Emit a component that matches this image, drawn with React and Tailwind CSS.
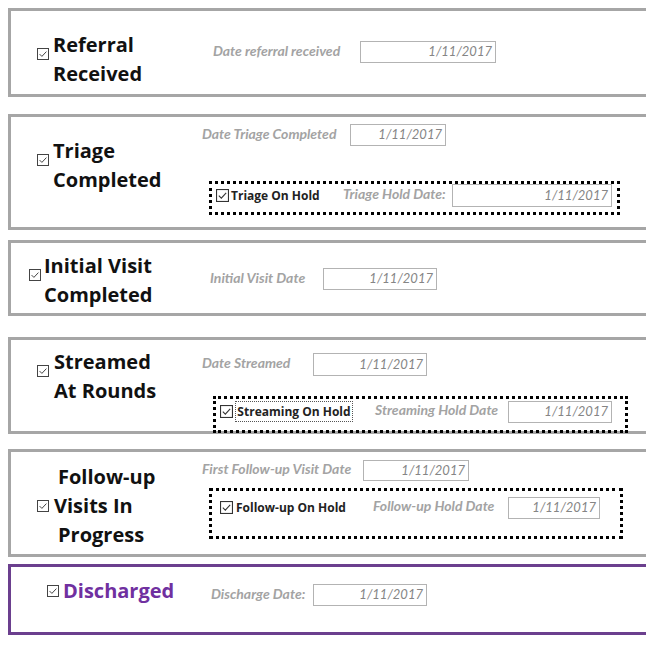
import React from "react";

const Check = ({ size = 12, color = "#444" }) => (
  <svg width={size} height={size} viewBox="0 0 12 12" className="shrink-0 block">
    <rect x="0.5" y="0.5" width="11" height="11" fill="white" stroke={color} strokeWidth="1" />
    <path d="M2.6 6.1 L4.9 8.4 L9.4 3.6" fill="none" stroke={color} strokeWidth="1" />
  </svg>
);

const titleCls = "font-['Open_Sans',sans-serif] font-bold text-[20px] leading-[29px] text-[#111] whitespace-nowrap";
const labelCls = "font-['Lato',sans-serif] italic font-bold text-[14px] leading-[16px] mb-[3px] text-[#a3a3a3] whitespace-nowrap";
const holdCls = "font-['Open_Sans',sans-serif] font-bold text-[12px] text-[#222] whitespace-nowrap";

const DateBox = ({ w, h = "h-[22px]" }) => (
  <div className={`${w} ${h} border border-[#b3b3b3] flex items-center justify-end pr-[3px] font-['Lato',sans-serif] italic text-[13px] text-[#858585] bg-white`}>
    1/11/2017
  </div>
);

export default function App() {
  return (
    <div className="w-[646px] h-[663px] overflow-hidden bg-white">
      {/* Panel 1 */}
      <div className="ml-2 mt-[8px] h-[89px] w-[660px] border-[3px] border-[#a6a6a6] flex items-start">
        <div className="w-[202px] shrink-0 pl-[26px] pt-[19px] flex items-start">
          <div className="mt-[18px]"><Check /></div>
          <div className={`ml-[4px] ${titleCls}`}>
            <div>Referral</div>
            <div>Received</div>
          </div>
        </div>
        <div className="pt-[30px]">
          <div className="flex items-center h-[22px]">
            <div className={`w-[147px] ${labelCls}`}>Date referral received</div>
            <DateBox w="w-[136px]" />
          </div>
        </div>
      </div>

      {/* Panel 2 */}
      <div className="ml-2 mt-[17px] h-[116px] w-[660px] border-[3px] border-[#a6a6a6] flex items-start">
        <div className="w-[191px] shrink-0 pl-[26px] pt-[19px] flex items-start">
          <div className="mt-[18px]"><Check /></div>
          <div className={`ml-[4px] ${titleCls}`}>
            <div>Triage</div>
            <div>Completed</div>
          </div>
        </div>
        <div className="pt-[7px]">
          <div className="flex items-center h-[22px]">
            <div className={`w-[148px] ${labelCls}`}>Date Triage Completed</div>
            <DateBox w="w-[96px]" />
          </div>
          <div className="ml-[7px] mt-[35px] w-[411px] h-[34px] border-[3px] border-dotted border-black flex items-center pl-[4px] pb-[5px]">
            <Check color="#333" size={13} />
            <div className={`ml-[2px] w-[112px] ${holdCls}`}>Triage On Hold</div>
            <div className={`w-[109px] ${labelCls}`}>Triage Hold Date:</div>
            <DateBox w="w-[160px]" h="h-[23px]" />
          </div>
        </div>
      </div>

      {/* Panel 3 */}
      <div className="ml-2 mt-[10px] h-[76px] w-[660px] border-[3px] border-[#a6a6a6] flex items-start">
        <div className="w-[199px] shrink-0 pl-[18px] pt-[8px] flex items-start">
          <div className="mt-[18px]"><Check /></div>
          <div className={`ml-[3px] ${titleCls}`}>
            <div>Initial Visit</div>
            <div>Completed</div>
          </div>
        </div>
        <div className="pt-[25px]">
          <div className="flex items-center h-[22px]">
            <div className={`w-[113px] ${labelCls}`}>Initial Visit Date</div>
            <DateBox w="w-[114px]" />
          </div>
        </div>
      </div>

      {/* Panel 4 */}
      <div className="ml-2 mt-[21px] h-[97px] w-[660px] border-[3px] border-[#a6a6a6] flex items-start">
        <div className="w-[191px] shrink-0 pl-[26px] pt-[7px] flex items-start">
          <div className="mt-[18px]"><Check /></div>
          <div className={`ml-[5px] ${titleCls}`}>
            <div>Streamed</div>
            <div>At Rounds</div>
          </div>
        </div>
        <div className="pt-[13px]">
          <div className="flex items-center h-[23px]">
            <div className={`w-[111px] ${labelCls}`}>Date Streamed</div>
            <DateBox w="w-[114px]" h="h-[23px]" />
          </div>
          <div className="ml-[11px] mt-[20px] w-[415px] h-[37px] border-[3px] border-dotted border-black flex items-center pl-[4px] pb-[6px]">
            <Check color="#333" size={13} />
            <div className={`ml-[2px] w-[118px] h-[21px] border border-dotted border-[#555] flex items-center justify-center ${holdCls}`}>Streaming On Hold</div>
            <div className={`ml-[22px] w-[133px] ${labelCls}`}>Streaming Hold Date</div>
            <DateBox w="w-[104px]" />
          </div>
        </div>
      </div>

      {/* Panel 5 */}
      <div className="ml-2 mt-[15px] h-[108px] w-[660px] border-[3px] border-[#a6a6a6] flex items-start">
        <div className="w-[191px] shrink-0 pl-[26px] pt-[10px] flex items-center">
          <Check />
          <div className={`ml-[5px] ${titleCls}`}>
            <div className="pl-[4px]">Follow-up</div>
            <div>Visits In</div>
            <div className="pl-[4px]">Progress</div>
          </div>
        </div>
        <div className="pt-[8px]">
          <div className="flex items-center h-[21px]">
            <div className={`w-[161px] ${labelCls}`}>First Follow-up Visit Date</div>
            <DateBox w="w-[106px]" h="h-[21px]" />
          </div>
          <div className="ml-[7px] mt-[7px] w-[414px] h-[51px] border-[3px] border-dotted border-black flex items-center pl-[8px] pb-[12px]">
            <Check color="#333" size={13} />
            <div className={`ml-[3px] w-[137px] ${holdCls}`}>Follow-up On Hold</div>
            <div className={`w-[135px] ${labelCls}`}>Follow-up Hold Date</div>
            <DateBox w="w-[92px]" />
          </div>
        </div>
      </div>

      {/* Panel 6 */}
      <div className="ml-2 mt-[7px] h-[71px] w-[660px] border-[3px] border-[#6b3f8e] flex items-start">
        <div className="w-[200px] shrink-0 pl-[36px] pt-[9px] flex items-center">
          <Check />
          <div className="ml-[4px] font-['Open_Sans',sans-serif] font-bold text-[20px] leading-[29px] text-[#7030a0] whitespace-nowrap">Discharged</div>
        </div>
        <div className="pt-[17px]">
          <div className="flex items-center h-[22px]">
            <div className={`w-[102px] ${labelCls}`}>Discharge Date:</div>
            <DateBox w="w-[114px]" />
          </div>
        </div>
      </div>
    </div>
  );
}
